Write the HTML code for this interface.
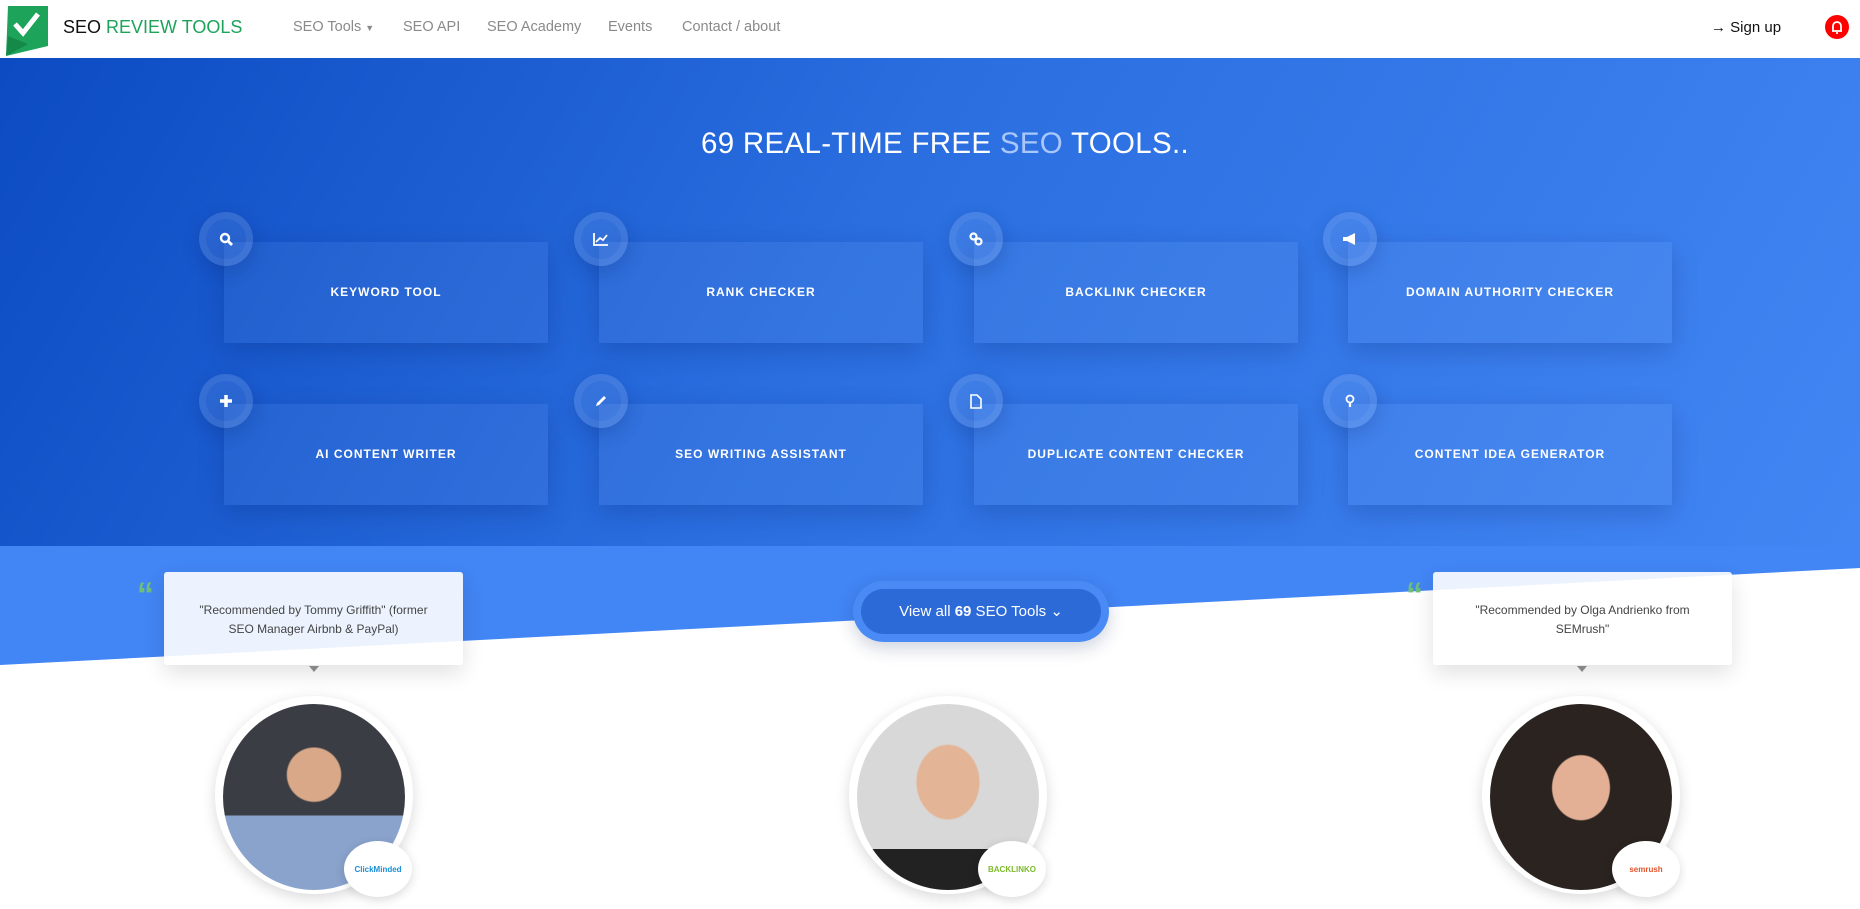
<!DOCTYPE html>
<html><head><meta charset="utf-8"><style>
*{margin:0;padding:0;box-sizing:border-box}
body{width:1860px;height:909px;overflow:hidden;background:#fff;font-family:"Liberation Sans",Arial,sans-serif;position:relative}
.nav{position:absolute;left:0;top:0;width:1860px;height:58px;background:#fff}
.nav a{position:absolute;top:19px;font-size:14.5px;color:#8a8a8a;text-decoration:none}
.hero{position:absolute;left:0;top:58px;width:1860px;height:488px;background:linear-gradient(120deg,#0c4bc2 0%,#2a6ee0 45%,#4286f4 100%)}
.band{position:absolute;left:0;top:546px;width:1860px;height:125px;background:#4285f4;clip-path:polygon(0 0,100% 0,100% 22px,0 119px)}
h1{position:absolute;top:127px;left:0;width:1860px;text-align:center;color:#fff;font-weight:400;font-size:29.5px;letter-spacing:.3px;padding-left:30px}
h1 span{color:#a9c7fb}
.card{position:absolute;width:324px;height:101px;background:rgba(255,255,255,.05);box-shadow:0 8px 25px rgba(0,20,80,.2);color:#fff;font-weight:bold;font-size:12px;letter-spacing:1px;text-align:center;padding-top:43px}
.ic{position:absolute;width:54px;height:54px;border-radius:50%;background:rgba(255,255,255,.08);border:7px solid rgba(255,255,255,.06);box-shadow:0 6px 18px rgba(0,20,80,.18);display:flex;align-items:center;justify-content:center}
.q{position:absolute;top:572px;width:299px;height:93px;background:rgba(255,255,255,.9);border-radius:3px;box-shadow:0 8px 22px rgba(0,0,0,.12);font-size:12px;color:#444;text-align:center;line-height:19px;padding-top:29px}
.qm{position:absolute;top:576px;color:#6dbf7a;font-size:34px;font-family:"Liberation Sans",sans-serif;font-weight:bold}
.tri{position:absolute;top:666px;width:0;height:0;border-left:5px solid transparent;border-right:5px solid transparent;border-top:6px solid #888}
.av{position:absolute;top:696px;width:198px;height:198px;border-radius:50%;background:#fff;box-shadow:0 4px 14px rgba(0,0,0,.15)}
.av .ph{position:absolute;left:8px;top:8px;width:182px;height:186px;border-radius:50%;overflow:hidden}
.badge{position:absolute;width:68px;height:56px;border-radius:50%;background:#fff;box-shadow:0 3px 10px rgba(0,0,0,.15);font-size:8px;font-weight:bold;display:flex;align-items:center;justify-content:center}
</style></head><body>
<div class="nav">
 <svg style="position:absolute;left:6px;top:6px" width="42" height="50" viewBox="0 0 42 50"><polygon points="2,0 42,0 42,40 0,50" fill="#1da35a"/><polygon points="0,50 2,30 22,38" fill="#158a48"/><path d="M9 18 L17 27 L32 8" stroke="#fff" stroke-width="5" fill="none"/></svg>
 <div style="position:absolute;left:63px;top:17px;font-size:18px;color:#111">SEO <span style="color:#1da35a">REVIEW TOOLS</span></div>
 <a style="left:293px">SEO Tools <span style="font-size:9px">▼</span></a>
 <a style="left:403px">SEO API</a>
 <a style="left:487px">SEO Academy</a>
 <a style="left:608px">Events</a>
 <a style="left:682px">Contact / about</a>
 <div style="position:absolute;left:1711px;top:19px;font-size:15px;color:#111">→ Sign up</div>
 <div style="position:absolute;left:1825px;top:15px;width:24px;height:24px;border-radius:50%;background:#f00"><svg width="24" height="24" viewBox="0 0 24 24"><path d="M8 16 V11 a4 4 0 0 1 8 0 V16 Z M7 16 H17 M11 18 H13" stroke="#fff" stroke-width="1.8" fill="none"/></svg></div>
</div>
<div class="hero"></div>
<div class="band"></div>
<h1>69 REAL-TIME FREE <span>SEO</span> TOOLS..</h1>

<div class="card" style="left:224px;top:242px">KEYWORD TOOL</div>
<div class="card" style="left:599px;top:242px">RANK CHECKER</div>
<div class="card" style="left:974px;top:242px">BACKLINK CHECKER</div>
<div class="card" style="left:1348px;top:242px">DOMAIN AUTHORITY CHECKER</div>
<div class="card" style="left:224px;top:404px">AI CONTENT WRITER</div>
<div class="card" style="left:599px;top:404px">SEO WRITING ASSISTANT</div>
<div class="card" style="left:974px;top:404px">DUPLICATE CONTENT CHECKER</div>
<div class="card" style="left:1348px;top:404px">CONTENT IDEA GENERATOR</div>

<div class="ic" style="left:199px;top:212px"><svg width="14" height="14"><circle cx="6" cy="6" r="4" stroke="#fff" stroke-width="2.4" fill="none"/><path d="M9 9 L13 13" stroke="#fff" stroke-width="2.8"/></svg></div>
<div class="ic" style="left:574px;top:212px"><svg width="16" height="14"><path d="M1 1 V13 H15 M3 10 L7 6 L10 8 L14 3" stroke="#fff" stroke-width="1.8" fill="none"/></svg></div>
<div class="ic" style="left:949px;top:212px"><svg width="14" height="14"><circle cx="4.5" cy="4.5" r="3" stroke="#fff" stroke-width="2.2" fill="none"/><circle cx="9.5" cy="9.5" r="3" stroke="#fff" stroke-width="2.2" fill="none"/></svg></div>
<div class="ic" style="left:1323px;top:212px"><svg width="16" height="14"><path d="M1 5 H5 L13 1 V13 L5 9 H1 Z" fill="#fff"/></svg></div>
<div class="ic" style="left:199px;top:374px"><svg width="14" height="14"><path d="M7 1 V13 M1 7 H13" stroke="#fff" stroke-width="3.5"/></svg></div>
<div class="ic" style="left:574px;top:374px"><svg width="14" height="14"><path d="M2 12 L3 9 L10 2 L12 4 L5 11 Z" fill="#fff"/></svg></div>
<div class="ic" style="left:949px;top:374px"><svg width="12" height="15"><path d="M1 1 H7 L11 5 V14 H1 Z" stroke="#fff" stroke-width="1.6" fill="none"/></svg></div>
<div class="ic" style="left:1323px;top:374px"><svg width="10" height="14"><circle cx="5" cy="5" r="3.5" stroke="#fff" stroke-width="1.8" fill="none"/><path d="M5 9 V13" stroke="#fff" stroke-width="2.2"/></svg></div>

<div class="qm" style="left:137px">“</div>
<div class="q" style="left:164px">"Recommended by Tommy Griffith" (former<br>SEO Manager Airbnb &amp; PayPal)</div>
<div class="tri" style="left:309px"></div>
<div class="qm" style="left:1406px">“</div>
<div class="q" style="left:1433px">"Recommended by Olga Andrienko from<br>SEMrush"</div>
<div class="tri" style="left:1577px"></div>

<div style="position:absolute;left:853px;top:581px;width:256px;height:61px;border-radius:31px;background:#4a8af4;box-shadow:0 6px 18px rgba(0,30,90,.2)"></div>
<div style="position:absolute;left:861px;top:589px;width:240px;height:45px;border-radius:23px;background:#2c6ad8;color:#fff;font-size:15px;text-align:center;line-height:45px">View all <b>69</b> SEO Tools ⌄</div>

<div class="av" style="left:215px"><div class="ph" style="background:radial-gradient(circle at 50% 38%,#d9a888 0 18%,transparent 19%),linear-gradient(#3a3d44 0 60%,#8aa3cc 60%)"></div></div>
<div class="badge" style="left:344px;top:841px;color:#1b8fd6">ClickMinded</div>
<div class="av" style="left:849px"><div class="ph" style="background:radial-gradient(ellipse at 50% 42%,#e3b596 0 24%,transparent 25%),linear-gradient(#d8d8d8 0 78%,#222 78%)"></div></div>
<div class="badge" style="left:978px;top:841px;color:#7cbb2a">BACKLINKO</div>
<div class="av" style="left:1482px"><div class="ph" style="background:radial-gradient(ellipse at 50% 45%,#e3b096 0 22%,#2a2320 23%),#2a2320"></div></div>
<div class="badge" style="left:1612px;top:841px;color:#e5532a">semrush</div>
</body></html>
